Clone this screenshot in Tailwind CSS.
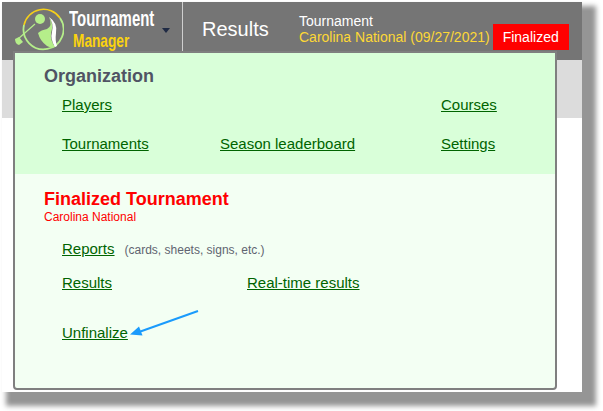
<!DOCTYPE html>
<html>
<head>
<meta charset="utf-8">
<script src="https://cdn.jsdelivr.net/npm/@tailwindcss/browser@4"></script>
</head>
<body class="bg-white overflow-hidden font-['Liberation_Sans',Arial,sans-serif]">
<div class="w-[603px] h-[411px] pl-[2px] pt-[2px]">
  <!-- app window -->
  <div class="relative w-[580px] h-[390px] bg-white shadow-[9px_9px_5px_5px_#959595]">
    <!-- header -->
    <div class="flex items-stretch h-[58px] bg-[#757575]">
      <div class="flex w-[181px] shrink-0 border-r border-[#cfcfcf]">
        <svg class="ml-[12px] mt-[3px] shrink-0" width="50" height="46" viewBox="0 0 50 46">
          <path d="M10 20A20 20 0 0 1 46 13" fill="none" stroke="#f5cf1a" stroke-width="1.6"/>
          <path d="M10 20A20 20 0 1 0 46 13" fill="none" stroke="#b5ee8a" stroke-width="1.8"/>
          <circle cx="26" cy="14" r="5" fill="#b5ee8a"/>
          <path d="M21 19L4 34" stroke="#b5ee8a" stroke-width="1.2"/>
          <path d="M1 34L5 32L9 37L5 40Q1 39 1 34Z" fill="#b5ee8a"/>
          <path d="M35 12Q39 21 33 24Q27 25 24 28Q26 36 33 41Q38 44 41 42Q36 35 37 28Q40 19 35 12Z" fill="#b5ee8a"/>
          <path d="M35 12Q44 18 42 28Q41 36 43 41L41 42Q36 34 38 27Q40 18 35 12Z" fill="#fff"/>
        </svg>
        <div class="flex flex-col ml-[5px]">
          <span class="mt-[4px] text-white text-[22px] leading-[25px] font-bold scale-x-[0.68] origin-left whitespace-nowrap">Tournament</span>
          <span class="ml-[4px] -mt-[1px] text-[#fbd30f] text-[19px] leading-[22px] font-bold scale-x-[0.72] origin-left whitespace-nowrap">Manager</span>
        </div>
        <div class="absolute left-[160px] top-[26px] w-0 h-0 border-x-[4px] border-t-[5px] border-x-transparent border-t-[#1f2a44]"></div>
      </div>
      <div class="w-[88px] pl-[19px] pt-[14px] text-white text-[20px] leading-[26px] shrink-0">Results</div>
      <div class="pl-[28px] pt-[11px] text-[14px] leading-[16px] whitespace-nowrap">
        <div class="text-white">Tournament</div>
        <div class="text-[#fdd835]">Carolina National (09/27/2021)</div>
      </div>
      <div class="ml-[3px] mt-[22px] w-[76px] h-[26px] bg-[#ff0000] text-white text-[14px] leading-[26px] text-center">Finalized</div>
    </div>
    <!-- band behind the menu -->
    <div class="h-[58px] bg-[#dcdcdc]"></div>

    <!-- dropdown menu -->
    <div class="absolute left-[11px] top-[49px] w-[544px] h-[339px] flex flex-col border-2 border-[#7f7f7f] rounded-b-[4px] overflow-hidden bg-[#f3fff3]">
      <div class="h-[121px] bg-[#d9ffd9] pl-[29px] pt-[12px]">
        <h2 class="text-[#505464] text-[18px] leading-[22px] font-bold">Organization</h2>
        <div class="grid grid-cols-[158px_221px_auto] pl-[18px] pt-[8px] gap-y-[20px] text-[15px] leading-[19px]">
          <a class="underline text-[#006400]">Players</a>
          <span></span>
          <a class="underline text-[#006400]">Courses</a>
          <a class="underline text-[#006400]">Tournaments</a>
          <a class="underline text-[#006400]">Season leaderboard</a>
          <a class="underline text-[#006400]">Settings</a>
        </div>
      </div>
      <div class="pl-[29px] pt-[14px]">
        <h2 class="text-[#ff0000] text-[18px] leading-[22px] font-bold">Finalized Tournament</h2>
        <div class="text-[#ff0000] text-[12px] leading-[14px]">Carolina National</div>
        <div class="pl-[18px] pt-[15px] text-[15px] leading-[19px]">
          <div class="flex items-baseline">
            <a class="underline text-[#006400]">Reports</a>
            <span class="ml-[10px] text-[12px] text-[#5f6470]">(cards, sheets, signs, etc.)</span>
          </div>
          <div class="grid grid-cols-[185px_auto] pt-[13px]">
            <a class="underline text-[#006400]">Results</a>
            <a class="underline text-[#006400]">Real-time results</a>
          </div>
          <div class="pt-[31px]"><a class="underline text-[#006400]">Unfinalize</a></div>
        </div>
      </div>
    </div>

    <!-- callout arrow -->
    <svg class="absolute left-[125px] top-[305px]" width="75" height="30" viewBox="0 0 75 30">
      <path d="M71 4L12 25" stroke="#1a9bfc" stroke-width="2" fill="none"/>
      <path d="M3 27.5L12 19.5L15.5 28.5Z" fill="#1a9bfc"/>
    </svg>
  </div>
</div>
</body>
</html>
